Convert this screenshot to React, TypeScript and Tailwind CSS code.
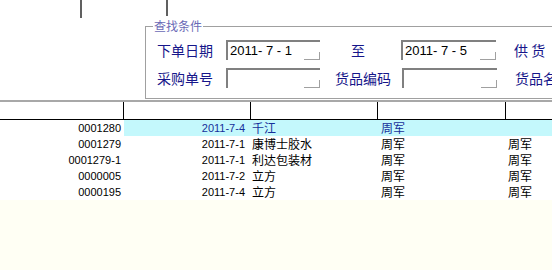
import React from 'react';

const rows = [
  { no: '0001280', date: '2011-7-4', supplier: '千江', buyer: '周军', maker: '', active: true },
  { no: '0001279', date: '2011-7-1', supplier: '康博士胶水', buyer: '周军', maker: '周军' },
  { no: '0001279-1', date: '2011-7-1', supplier: '利达包装材', buyer: '周军', maker: '周军' },
  { no: '0000005', date: '2011-7-2', supplier: '立方', buyer: '周军', maker: '周军' },
  { no: '0000195', date: '2011-7-4', supplier: '立方', buyer: '周军', maker: '周军' },
];

const cjk = "font-['Noto_Sans_CJK_SC',sans-serif]";
const num = "font-['Liberation_Sans','Noto_Sans_CJK_SC',sans-serif]";

const DateBox: React.FC<{ value?: string; w: string }> = ({ value, w }) => (
  <div className={`${w} h-[20px] flex items-stretch border-t-2 border-l-2 border-[#808080] bg-white`}>
    <span className={`flex-1 pl-[2px] text-[13px] leading-[18px] text-black whitespace-pre ${num}`}>{value}</span>
    <span className="w-[16px] self-end h-[8px] border-b border-r border-[#a0a0a0]" />
  </div>
);

const Label: React.FC<{ children: React.ReactNode; className?: string }> = ({ children, className = '' }) => (
  <span className={`text-[14px] leading-none text-[#16168a] whitespace-nowrap ${cjk} ${className}`}>{children}</span>
);

const App: React.FC = () => {
  return (
    <div className="w-[552px] h-[270px] overflow-hidden bg-white flex flex-col">
      {/* leftover splitter lines from the toolbar above */}
      <div className="h-[19px] flex items-start shrink-0">
        <div className="ml-[80px] w-[2px] h-[18px] bg-[#606060]" />
        <div className="ml-[84px] w-[2px] h-[16px] bg-[#606060]" />
      </div>

      {/* search conditions */}
      <fieldset className="ml-[145px] w-[440px] shrink-0 border border-[#a0a0a0] pt-[7px] pb-[10px]">
        <legend className={`ml-[7px] px-[1px] text-[12px] leading-[14px] text-[#6a6ab6] ${cjk}`}>查找条件</legend>
        <div className="flex items-center h-[20px] pl-[11px]">
          <Label className="w-[56px]">下单日期</Label>
          <div className="ml-[13px]"><DateBox w="w-[94px]" value="2011- 7 - 1" /></div>
          <div className="w-[81px] pl-[31px]"><Label>至</Label></div>
          <DateBox w="w-[95px]" value="2011- 7 - 5" />
          <Label className="ml-[18px]">供 货</Label>
        </div>
        <div className="flex items-center h-[20px] pl-[11px] mt-[8px]">
          <Label className="w-[56px]">采购单号</Label>
          <div className="ml-[13px]"><DateBox w="w-[94px]" /></div>
          <Label className="ml-[15px] w-[55px]">货品编码</Label>
          <div className="ml-[12px]"><DateBox w="w-[95px]" /></div>
          <Label className="ml-[18px]">货品名</Label>
        </div>
      </fieldset>

      {/* grid */}
      <div className="mt-[1px] flex-1 flex flex-col bg-[#fffff4]">
        <div className="flex h-[20px] shrink-0 bg-white border-t-2 border-t-[#a8a8a8] border-b border-b-black">
          <div className="w-[124px] border-r border-black" />
          <div className="w-[127px] border-r border-black" />
          <div className="w-[127px] border-r border-black" />
          <div className="w-[128px] border-r border-black" />
          <div className="flex-1" />
        </div>
        {rows.map((r) => (
          <div key={r.no} className="flex h-[16px] bg-white text-[12px] leading-[16px] text-black">
            <div className={`w-[124px] pr-[3px] text-right text-[11px] ${num}`}>{r.no}</div>
            <div className={`flex-1 flex ${r.active ? 'bg-[#c4f8fc] text-[#16309a]' : ''}`}>
              <div className={`w-[127px] pr-[6px] text-right text-[11px] ${num}`}>{r.date}</div>
              <div className={`w-[127px] pl-[1px] ${cjk}`}>{r.supplier}</div>
              <div className={`w-[128px] pl-[3px] ${cjk}`}>{r.buyer}</div>
              <div className={`flex-1 pl-[2px] ${cjk}`}>{r.maker}</div>
            </div>
          </div>
        ))}
      </div>
    </div>
  );
};

export default App;
